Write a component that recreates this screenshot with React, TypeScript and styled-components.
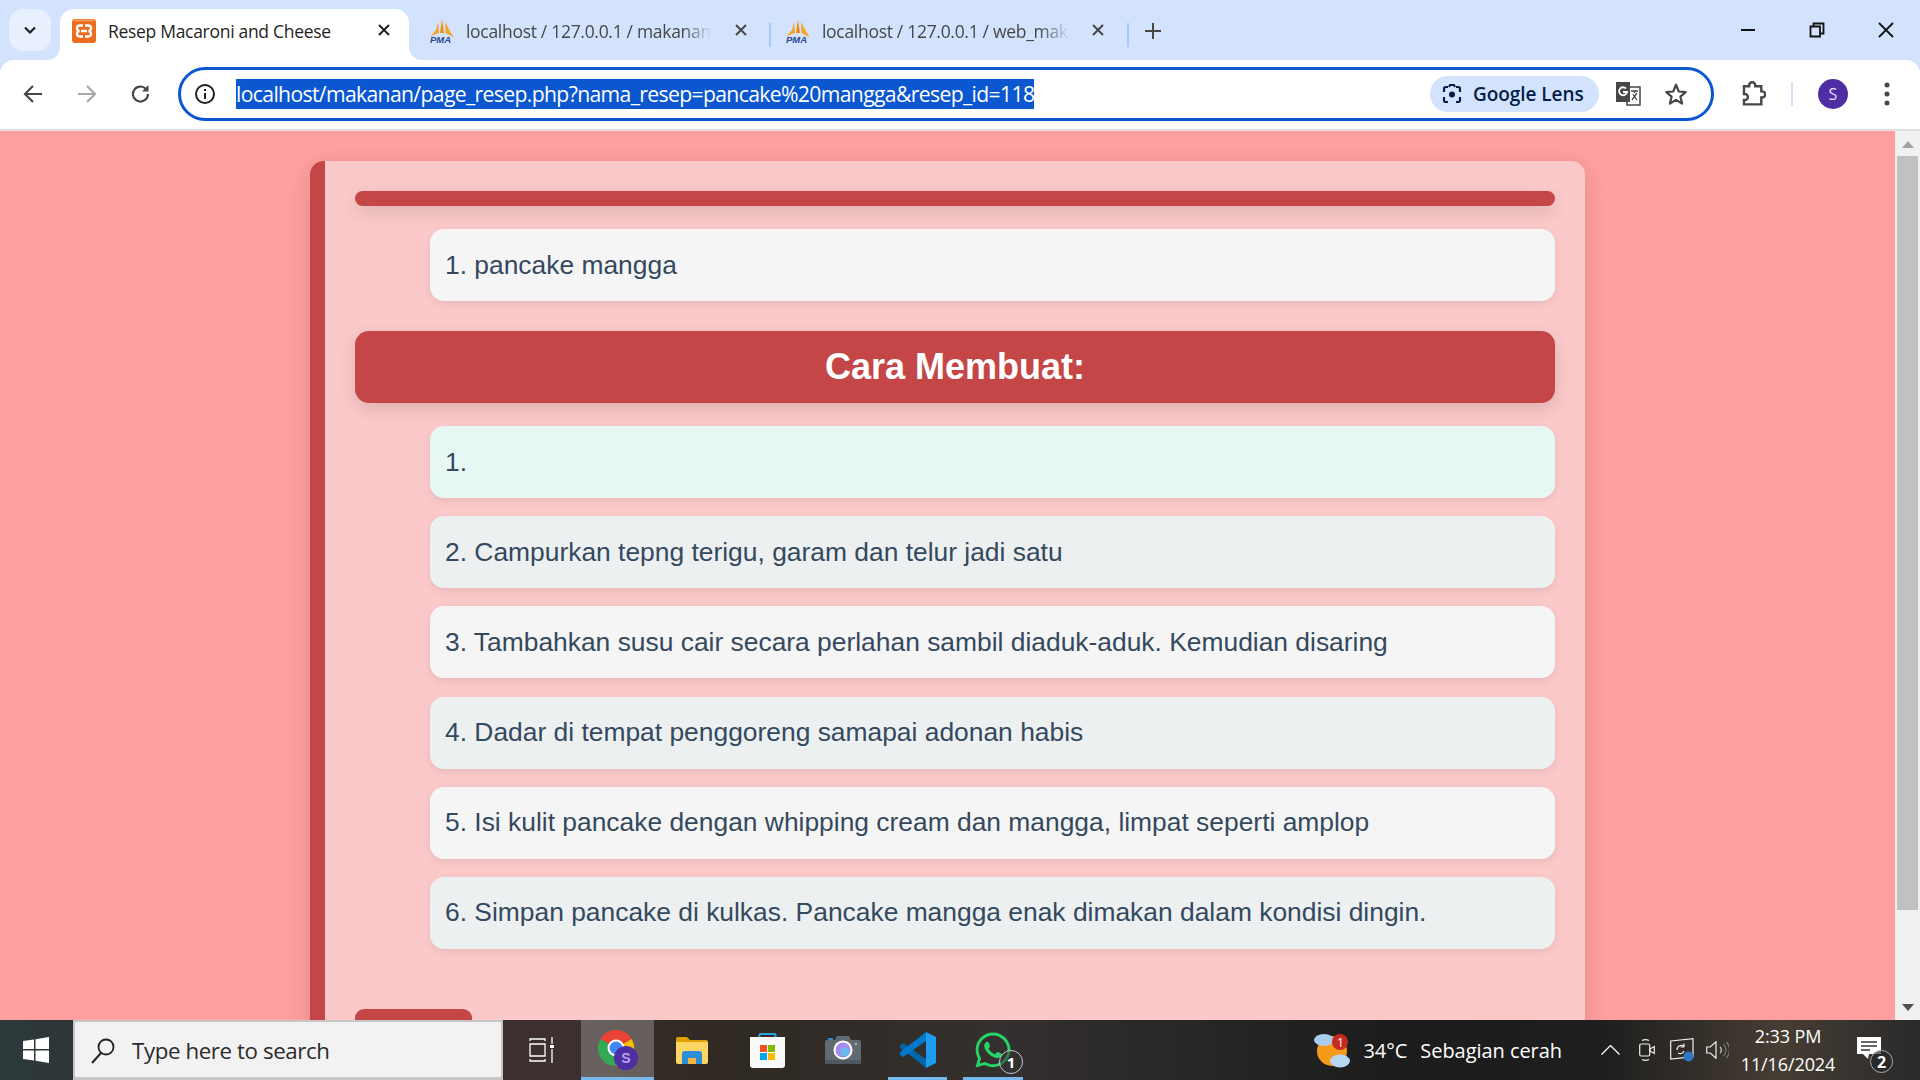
import React from "react"
import styled, { createGlobalStyle } from "styled-components"
import { FaWhatsapp } from "react-icons/fa"

const GlobalStyle = createGlobalStyle`
  html, body {
    margin: 0;
    padding: 0;
    height: 100%;
    overflow: hidden;
  }
  * {
    box-sizing: border-box;
  }
`

const Screen = styled.div`
  width: 1920px;
  height: 1080px;
  display: flex;
  flex-direction: column;
  overflow: hidden;
  background: #d3e3fd;
  font-family: "Open Sans", "Liberation Sans", sans-serif;
`

const TabStrip = styled.div`
  height: 60px;
  flex: none;
  background: #d3e3fd;
  display: flex;
  align-items: flex-end;
  padding-left: 9px;
`

const TabSearch = styled.div`
  width: 42px;
  height: 42px;
  margin-bottom: 9px;
  border-radius: 14px;
  background: #e8f0fe;
  display: flex;
  align-items: center;
  justify-content: center;
  margin-right: 9px;
`

const ActiveTab = styled.div`
  width: 349px;
  height: 51px;
  background: #fff;
  border-radius: 14px 14px 0 0;
  display: flex;
  align-items: center;
  padding: 0 0 8px 12px;
  position: relative;

  &::before,
  &::after {
    content: "";
    position: absolute;
    bottom: 0;
    width: 12px;
    height: 12px;
  }
  &::before {
    right: 100%;
    background: radial-gradient(circle at 0 0, #d3e3fd 11.5px, #fff 12px);
  }
  &::after {
    left: 100%;
    background: radial-gradient(circle at 100% 0, #d3e3fd 11.5px, #fff 12px);
  }
`

const Tab = styled.div<{ $width: number; $pad: number }>`
  width: ${props => props.$width}px;
  height: 51px;
  display: flex;
  align-items: center;
  padding: 0 0 8px ${props => props.$pad}px;
  position: relative;
`

const TabTitle = styled.span<{ $active?: boolean; $width: number }>`
  width: ${props => props.$width}px;
  margin-left: 12px;
  font-size: 17.5px;
  letter-spacing: -0.3px;
  white-space: nowrap;
  overflow: hidden;
  color: ${props => props.$active ? "#1f1f1f" : "#474747"};
  ${props => !props.$active && `
    -webkit-mask-image: linear-gradient(90deg, #000 88%, transparent);
    mask-image: linear-gradient(90deg, #000 88%, transparent);
  `}
`

const TabClose = styled.span<{ $right: number }>`
  position: absolute;
  right: ${props => props.$right}px;
  top: 14px;
  display: flex;
`

const TabDivider = styled.div`
  width: 2px;
  height: 24px;
  margin-bottom: 13px;
  background: #a8c7fa;
`

const NewTab = styled.div`
  width: 48px;
  height: 51px;
  padding-bottom: 8px;
  display: flex;
  align-items: center;
  justify-content: center;
`

const WindowControls = styled.div`
  margin-left: auto;
  height: 60px;
  display: flex;
  align-items: center;
`

const WindowButton = styled.div`
  width: 69px;
  height: 60px;
  display: flex;
  align-items: center;
  justify-content: center;
`

const Toolbar = styled.div`
  height: 71px;
  flex: none;
  background: #fff;
  border-bottom: 2px solid #e0e0e0;
  border-radius: 14px 14px 0 0;
  display: flex;
  align-items: center;
  padding: 0 0 2px 11px;
`

const NavButton = styled.div`
  width: 44px;
  height: 44px;
  margin-right: 10px;
  display: flex;
  align-items: center;
  justify-content: center;
  &:nth-child(3) {
    margin-right: 15px;
  }
`

const Omnibox = styled.div`
  width: 1536px;
  height: 54px;
  border: 3px solid #0b57d0;
  border-radius: 27px;
  display: flex;
  align-items: center;
  padding-left: 13px;
  flex: none;
`

const Url = styled.span`
  margin-left: 20px;
  height: 30px;
  line-height: 30px;
  background: #0b57d0;
  color: #fff;
  font-size: 21.2px;
  letter-spacing: -0.66px;
  white-space: nowrap;
`

const LensPill = styled.div`
  margin-left: auto;
  height: 36px;
  width: 169px;
  border-radius: 18px;
  background: #d3e3fd;
  display: flex;
  align-items: center;
  padding-left: 11px;
  gap: 10px;
  color: #041e49;
  font-size: 19px;
  letter-spacing: -0.05px;
  font-weight: 600;
`

const OmniIcon = styled.div`
  width: 30px;
  height: 30px;
  margin-left: 14px;
  display: flex;
  align-items: center;
  justify-content: center;
  &:last-child {
    margin-right: 20px;
    margin-left: 18px;
  }
`

const ToolbarRight = styled.div`
  flex: 1;
  display: flex;
  align-items: center;
  padding-left: 27px;
`

const ToolbarSeparator = styled.div`
  width: 2px;
  height: 24px;
  margin: 0 25px 0 25px;
  background: #d3e3fd;
`

const Avatar = styled.div`
  width: 30px;
  height: 30px;
  border-radius: 50%;
  background: #4f2da3;
  color: #e8def8;
  font-size: 16px;
  display: flex;
  align-items: center;
  justify-content: center;
  margin-right: 36px;
`

const Body = styled.div`
  flex: 1;
  min-height: 0;
  display: flex;
`

const Page = styled.div`
  flex: 1;
  min-width: 0;
  overflow: hidden;
  background: #ff9f9f;
  padding: 30px 310px 0;
  font-family: "Liberation Sans", Arial, sans-serif;
`

const Card = styled.div`
  background: #fbc9c9;
  border-left: 15px solid #c44646;
  border-radius: 14px 14px 0 0;
  padding: 30px 30px 0;
  box-shadow: 0 6px 24px rgba(0, 0, 0, 0.12);
  height: 1000px;
`

const Rule = styled.div`
  height: 15px;
  background: #c44646;
  border-radius: 8px;
  box-shadow: 0 6px 18px rgba(0, 0, 0, 0.12);
`

const ItemList = styled.div<{ $top: number; $gap: number }>`
  margin-top: ${props => props.$top}px;
  margin-left: 75px;
  display: flex;
  flex-direction: column;
  gap: ${props => props.$gap}px;
`

const Item = styled.div<{ $bg: string }>`
  height: 72px;
  border-radius: 14px;
  background: ${props => props.$bg};
  box-shadow: 0 3px 9px rgba(0, 0, 0, 0.08);
  padding-left: 15px;
  display: flex;
  align-items: center;
  font-size: 26.4px;
  color: #34495e;
`

const SectionHeader = styled.div`
  margin-top: 30px;
  height: 72px;
  border-radius: 14px;
  background: #c44646;
  box-shadow: 0 6px 18px rgba(0, 0, 0, 0.12);
  display: flex;
  align-items: center;
  justify-content: center;
  color: #fff;
  font-weight: 700;
  font-size: 36px;
`

const BackButton = styled.div`
  margin-top: 60px;
  width: 117px;
  height: 50px;
  background: #c44646;
  border-radius: 9px;
`

const Scrollbar = styled.div`
  width: 25px;
  flex: none;
  background: #f1f1f1;
  display: flex;
  flex-direction: column;
  align-items: center;
  justify-content: space-between;
  padding: 10px 2px 9px;
  position: relative;
`

const ScrollThumb = styled.div`
  position: absolute;
  top: 25px;
  left: 2px;
  right: 2px;
  height: 754px;
  background: #c1c1c1;
`

const Taskbar = styled.div`
  height: 60px;
  flex: none;
  display: flex;
  align-items: stretch;
  color: #fff;
  background: linear-gradient(90deg, #2c3a3c 0, #2e3537 70px, #3a2c2c 300px, #3c3030 560px, #2f2922 720px, #33302f 1000px, #1c1c1c 1400px, #1e1e1e 1600px, #463d33 1780px, #2a2a2a 1920px);
`

const StartButton = styled.div`
  width: 73px;
  padding-right: 2px;
  display: flex;
  align-items: center;
  justify-content: center;
`

const SearchBox = styled.div`
  width: 430px;
  background: #f2f2f2;
  border: 2px solid #c6c6c6;
  border-bottom-width: 3px;
  display: flex;
  align-items: center;
  padding: 2px 0 0 15px;
  gap: 16px;
  color: #2b2b2b;
  font-size: 22.3px;
  letter-spacing: -0.4px;
`

const TaskIcon = styled.div<{ $width: number; $open?: boolean; $active?: boolean; $inset?: number }>`
  width: ${props => props.$width}px;
  position: relative;
  display: flex;
  align-items: center;
  justify-content: center;
  background: ${props => props.$active ? "rgba(255,255,255,.24)" : "transparent"};

  &::after {
    content: "";
    display: ${props => props.$open ? "block" : "none"};
    position: absolute;
    bottom: 0;
    height: 3px;
    left: ${props => props.$inset ?? 0}px;
    right: ${props => props.$inset ?? 0}px;
    background: #76b9ed;
  }
`

const CountBadge = styled.span`
  position: absolute;
  left: 44px;
  top: 30px;
  width: 24px;
  height: 24px;
  border-radius: 50%;
  border: 1px solid #c8c8c8;
  background: rgba(50, 50, 50, 0.55);
  color: #fff;
  font-size: 15px;
  font-weight: 700;
  display: flex;
  align-items: center;
  justify-content: center;
`

const Tray = styled.div`
  margin-left: auto;
  padding-right: 19px;
  display: flex;
  align-items: center;
`

const Weather = styled.div`
  display: flex;
  align-items: center;
  font-size: 20px;
  letter-spacing: -0.05px;
  margin-right: 39px;
`

const WeatherText = styled.span`
  white-space: nowrap;
  margin-left: 13px;
  padding-top: 1px;
`

const WeatherBadge = styled.span`
  position: absolute;
  top: 2px;
  right: 2px;
  width: 16px;
  height: 16px;
  border-radius: 50%;
  background: #c42b1c;
  color: #fff;
  font-size: 12px;
  display: flex;
  align-items: center;
  justify-content: center;
`

const WeatherIcon = styled.div`
  position: relative;
  width: 36px;
  height: 36px;
`

const TrayIcon = styled.span<{ $after: number }>`
  display: flex;
  margin-right: ${props => props.$after}px;
`

const Clock = styled.div`
  width: 96px;
  margin-left: 11px;
  text-align: center;
  font-size: 18px;
  letter-spacing: -0.1px;
  line-height: 28px;
  white-space: nowrap;
`

const Notify = styled.div`
  position: relative;
  width: 62px;
  height: 60px;
  margin-left: 3px;
  display: flex;
  align-items: center;
  justify-content: center;
`

const NotifyCount = styled.span`
  position: absolute;
  right: 8px;
  bottom: 7px;
  width: 23px;
  height: 23px;
  border-radius: 50%;
  border: 1px solid #aaa;
  background: rgba(40, 40, 40, 0.7);
  color: #fff;
  font-size: 16px;
  font-weight: 700;
  display: flex;
  align-items: center;
  justify-content: center;
`

const PmaIcon = () => (
  <svg width="24" height="24" viewBox="0 0 24 24">
    <path d="M8 3 6 11 0 18c3-2 7-3.500 9-4z" fill="#f6a428" />
    <path d="M12 0 10 14l4 0z" fill="#f28b1e" />
    <path d="M15 3l.500 11 8 4.500z" fill="#f6a428" />
    <text x="0" y="24" fontSize="9.500" fontWeight="700" fontStyle="italic" fontFamily="Liberation Sans" fill="#2c4a8c">PMA</text>
  </svg>
)

const XamppIcon = () => (
  <svg width="24" height="24" viewBox="0 0 24 24">
    <rect width="24" height="24" rx="3" fill="#ee6c1d" />
    <path d="M2 1.500h20" stroke="#f7a468" strokeWidth="1.500" />
    <path d="M11 6.500H8a2.700 2.700 0 0 0-.5 5.500A2.700 2.700 0 0 0 8 17.500h3M13 6.500h3a2.700 2.700 0 0 1 .5 5.500 2.700 2.700 0 0 1-.5 5.500h-3M9 12h6" fill="none" stroke="#fff" strokeWidth="2.300" />
  </svg>
)

const CloseGlyph = ({ color = "#1f1f1f" }: { color?: string }) => (
  <svg width="14" height="14" viewBox="0 0 14 14">
    <path d="M2 2l10 10M12 2 2 12" stroke={color} strokeWidth="2" />
  </svg>
)

const steps = [
  { text: "1.", bg: "#e6f7f4" },
  { text: "2. Campurkan tepng terigu, garam dan telur jadi satu", bg: "#ecf0f1" },
  { text: "3. Tambahkan susu cair secara perlahan sambil diaduk-aduk. Kemudian disaring", bg: "#f5f5f5" },
  { text: "4. Dadar di tempat penggoreng samapai adonan habis", bg: "#ecf0f1" },
  { text: "5. Isi kulit pancake dengan whipping cream dan mangga, limpat seperti amplop", bg: "#f5f5f5" },
  { text: "6. Simpan pancake di kulkas. Pancake mangga enak dimakan dalam kondisi dingin.", bg: "#ecf0f1" },
]

export default function App() {
  return (
    <Screen>
      <GlobalStyle />
      <TabStrip>
        <TabSearch>
          <svg width="16" height="16" viewBox="0 0 16 16">
            <path d="M3 5.500 8 10.500l5-5" fill="none" stroke="#1f1f1f" strokeWidth="2.200" />
          </svg>
        </TabSearch>
        <ActiveTab>
          <XamppIcon />
          <TabTitle $active $width={270}>Resep Macaroni and Cheese</TabTitle>
          <TabClose $right={18}><CloseGlyph /></TabClose>
        </ActiveTab>
        <Tab $width={360} $pad={21}>
          <PmaIcon />
          <TabTitle $width={246}>localhost / 127.0.0.1 / makanan</TabTitle>
          <TabClose $right={21}><CloseGlyph color="#474747" /></TabClose>
        </Tab>
        <TabDivider />
        <Tab $width={356} $pad={15}>
          <PmaIcon />
          <TabTitle $width={248}>localhost / 127.0.0.1 / web_makanan</TabTitle>
          <TabClose $right={22}><CloseGlyph color="#474747" /></TabClose>
        </Tab>
        <TabDivider />
        <NewTab>
          <svg width="18" height="18" viewBox="0 0 18 18">
            <path d="M9 1v16M1 9h16" stroke="#474747" strokeWidth="2" />
          </svg>
        </NewTab>
        <WindowControls>
          <WindowButton>
            <svg width="14" height="4" viewBox="0 0 14 4"><path d="M0 2h14" stroke="#111" strokeWidth="2" /></svg>
          </WindowButton>
          <WindowButton>
            <svg width="16" height="16" viewBox="0 0 16 16">
              <path d="M1.500 4.500h9.500v10H1.500z M4.500 4V1.500h10v10H11.500" fill="none" stroke="#111" strokeWidth="1.800" />
            </svg>
          </WindowButton>
          <WindowButton>
            <svg width="16" height="16" viewBox="0 0 16 16"><path d="M1 1l14 14M15 1 1 15" stroke="#111" strokeWidth="1.800" /></svg>
          </WindowButton>
        </WindowControls>
      </TabStrip>

      <Toolbar>
        <NavButton>
          <svg width="22" height="22" viewBox="0 0 22 22"><path d="M20 11H3M11 3l-8 8 8 8" fill="none" stroke="#474747" strokeWidth="2.200" /></svg>
        </NavButton>
        <NavButton>
          <svg width="22" height="22" viewBox="0 0 22 22"><path d="M2 11h17M11 3l8 8-8 8" fill="none" stroke="#a9a9a9" strokeWidth="2.200" /></svg>
        </NavButton>
        <NavButton>
          <svg width="22" height="22" viewBox="0 0 22 22">
            <path d="M18 11a7.500 7.500 0 1 1-2.200-5.300" fill="none" stroke="#474747" strokeWidth="2.200" />
            <path d="M18.500 2v6.500H12z" fill="#474747" />
          </svg>
        </NavButton>
        <Omnibox>
          <svg width="22" height="22" viewBox="0 0 22 22">
            <circle cx="11" cy="11" r="9" fill="none" stroke="#1f1f1f" strokeWidth="2" />
            <path d="M11 10v6M11 6v2" stroke="#1f1f1f" strokeWidth="2" />
          </svg>
          <Url>localhost/makanan/page_resep.php?nama_resep=pancake%20mangga&amp;resep_id=118</Url>
          <LensPill>
            <svg width="22" height="24" viewBox="0 0 22 24">
              <path d="M7 5H5a2 2 0 0 0-2 2v3M15 5h2a2 2 0 0 1 2 2v3M3 15v3a2 2 0 0 0 2 2h2M19 15v3a2 2 0 0 1-2 2h-2" fill="none" stroke="#041e49" strokeWidth="2.200" />
              <path d="M8 5l1-2h4l1 2" fill="none" stroke="#041e49" strokeWidth="2" />
              <circle cx="11" cy="12.500" r="3" fill="#041e49" />
            </svg>
            Google Lens
          </LensPill>
          <OmniIcon>
            <svg width="26" height="26" viewBox="0 0 26 26">
              <rect x="12" y="6" width="13" height="18" fill="#fff" stroke="#474747" strokeWidth="1.500" />
              <path d="M1 1h14v20H1z" fill="#474747" />
              <path d="M16 10h7M19.500 10v2M17 19l5-7M18 13l4 6" fill="none" stroke="#474747" strokeWidth="1.300" />
              <path d="M11 7.500A4 4 0 1 0 12 11H8" fill="none" stroke="#fff" strokeWidth="1.800" />
            </svg>
          </OmniIcon>
          <OmniIcon>
            <svg width="24" height="24" viewBox="0 0 26 26">
              <path d="M13 3l3 7.300 7.500.6-5.700 5 1.800 7.500L13 19.400 6.400 23.400l1.800-7.500-5.700-5 7.500-.6z" fill="none" stroke="#474747" strokeWidth="2.400" strokeLinejoin="round" />
            </svg>
          </OmniIcon>
        </Omnibox>
        <ToolbarRight>
          <svg width="25" height="26" viewBox="0 0 28 30">
            <path d="M3 6h6V5a3.500 3.500 0 0 1 7 0v1h7v6h1a3.500 3.500 0 0 1 0 7h-1v8H3v-5h1a3.500 3.500 0 0 0 0-7H3z" fill="none" stroke="#474747" strokeWidth="2.800" />
          </svg>
          <ToolbarSeparator />
          <Avatar>S</Avatar>
          <svg width="6" height="24" viewBox="0 0 6 24">
            <circle cx="3" cy="3" r="2.500" fill="#474747" />
            <circle cx="3" cy="12" r="2.500" fill="#474747" />
            <circle cx="3" cy="21" r="2.500" fill="#474747" />
          </svg>
        </ToolbarRight>
      </Toolbar>

      <Body>
        <Page>
          <Card>
            <Rule />
            <ItemList $top={23} $gap={18}>
              <Item $bg="#f5f5f5">1. pancake mangga</Item>
            </ItemList>
            <SectionHeader>Cara Membuat:</SectionHeader>
            <ItemList $top={23} $gap={18.2}>
              {steps.map(step => (
                <Item key={step.text} $bg={step.bg}>{step.text}</Item>
              ))}
            </ItemList>
            <BackButton />
          </Card>
        </Page>
        <Scrollbar>
          <ScrollThumb />
          <svg width="12" height="7" viewBox="0 0 12 7"><path d="M6 0l6 7H0z" fill="#a3a3a3" /></svg>
          <svg width="12" height="7" viewBox="0 0 12 7"><path d="M0 0h12L6 7z" fill="#505050" /></svg>
        </Scrollbar>
      </Body>

      <Taskbar>
        <StartButton>
          <svg width="26" height="26" viewBox="0 0 26 26">
            <path d="M0 4l11-1.600V12H0zM12.500 2.200 26 0v12H12.500zM0 13.500h11v10L0 22zM12.500 13.500H26V26l-13.500-2.200z" fill="#fff" />
          </svg>
        </StartButton>
        <SearchBox>
          <svg width="26" height="28" viewBox="0 0 26 28">
            <circle cx="16" cy="10" r="7.500" fill="none" stroke="#222" strokeWidth="1.800" />
            <path d="M11 16 2 26" stroke="#222" strokeWidth="2" />
          </svg>
          Type here to search
        </SearchBox>
        <TaskIcon $width={78}>
          <svg width="26" height="28" viewBox="0 0 26 28">
            <path d="M1 5V3h15v2M1 23v2h15v-2M1 8h15v12H1z" fill="none" stroke="#fff" strokeWidth="1.300" />
            <path d="M23 1v7M23 13v14" stroke="#fff" strokeWidth="1.300" />
            <rect x="21" y="9" width="4" height="3" fill="#fff" />
          </svg>
        </TaskIcon>
        <TaskIcon $width={73} $open $active>
          <svg width="40" height="40" viewBox="0 0 40 40">
            <path d="M18 18 2.400 9A18 18 0 0 1 33.600 9z" fill="#ea4335" />
            <path d="M18 18 33.600 9A18 18 0 0 1 18 36z" fill="#fbbc04" />
            <path d="M18 18 18 36A18 18 0 0 1 2.400 9z" fill="#34a853" />
            <circle cx="18" cy="18" r="8.500" fill="#fff" />
            <circle cx="18" cy="18" r="6.500" fill="#4285f4" />
            <circle cx="28" cy="28" r="12" fill="#4f2da3" />
            <text x="28" y="33" textAnchor="middle" fontSize="14" fontWeight="700" fontFamily="Liberation Sans" fill="#b9a3ec">S</text>
          </svg>
        </TaskIcon>
        <TaskIcon $width={76}>
          <svg width="32" height="27" viewBox="0 0 32 27">
            <path d="M0 2a2 2 0 0 1 2-2h9l3 3h16a2 2 0 0 1 2 2v3H0z" fill="#e0a106" />
            <path d="M0 5h32v20a2 2 0 0 1-2 2H2a2 2 0 0 1-2-2z" fill="#fcd565" />
            <path d="M6 17a3 3 0 0 1 3-3h14a3 3 0 0 1 3 3v10H6z" fill="#2a8fd8" />
            <path d="M12 21h8v6h-8z" fill="#f1b63b" />
          </svg>
        </TaskIcon>
        <TaskIcon $width={75}>
          <svg width="35" height="35" viewBox="0 0 35 35">
            <path d="M9.500 6V2a1 1 0 0 1 1-1h14a1 1 0 0 1 1 1v4" fill="none" stroke="#29a3e0" strokeWidth="2" />
            <path d="M0 4h35v28a3 3 0 0 1-3 3H3a3 3 0 0 1-3-3z" fill="#fafafa" />
            <path d="M10 12h7v7h-7z" fill="#f25022" />
            <path d="M18 12h7v7h-7z" fill="#7fba00" />
            <path d="M10 20h7v7h-7z" fill="#00a4ef" />
            <path d="M18 20h7v7h-7z" fill="#ffb900" />
          </svg>
        </TaskIcon>
        <TaskIcon $width={75}>
          <svg width="36" height="28" viewBox="0 0 36 28">
            <path d="M3 5V3a1 1 0 0 1 1-1h3a1 1 0 0 1 1 1v2z" fill="#2a8fd8" />
            <path d="M0 6a2 2 0 0 1 2-2h8l2-4h12l2 4h8a2 2 0 0 1 2 2v22H0z" fill="#5f6a72" />
            <path d="M0 24h36v4H0z" fill="#4f585f" />
            <circle cx="18" cy="14" r="9.500" fill="#fff" />
            <circle cx="18" cy="14" r="7.500" fill="#a48cee" />
            <circle cx="20" cy="16" r="4.500" fill="#6ab8f0" />
            <circle cx="31" cy="8" r="1" fill="#cfd4d8" />
          </svg>
        </TaskIcon>
        <TaskIcon $width={75} $open $inset={8}>
          <svg width="36" height="36" viewBox="0 0 36 36">
            <path d="M26 36V27L3 11 0 13.500v2.500L18.500 30 26 36z" fill="#0065a9" />
            <path d="M26 0v9L3 25 0 22.500V20L18.500 6 26 0z" fill="#007acc" />
            <path d="M26 0 36 5v26l-10 5z" fill="#1f9cf0" />
          </svg>
        </TaskIcon>
        <TaskIcon $width={76} $open $inset={8}>
          <FaWhatsapp size={40} color="#25d366" />
          <CountBadge>1</CountBadge>
        </TaskIcon>
        <Tray>
          <Weather>
            <WeatherIcon>
              <svg width="36" height="36" viewBox="0 0 36 36">
                <circle cx="18" cy="19" r="15" fill="#f59a1b" />
                <ellipse cx="10" cy="8" rx="10" ry="6" fill="#a9cdee" />
                <ellipse cx="26" cy="29" rx="10" ry="6.500" fill="#b7d6f2" />
              </svg>
              <WeatherBadge>1</WeatherBadge>
            </WeatherIcon>
            <WeatherText>34°C</WeatherText>
            <WeatherText>Sebagian cerah</WeatherText>
          </Weather>
          <TrayIcon $after={19}>
            <svg width="19" height="10" viewBox="0 0 19 10"><path d="M.5 9.500l9-9 9 9" fill="none" stroke="#fff" strokeWidth="1.300" /></svg>
          </TrayIcon>
          <TrayIcon $after={15}>
            <svg width="16" height="22" viewBox="0 0 16 22">
              <rect x=".7" y="5" width="10" height="12" rx="1.500" fill="none" stroke="#eee" strokeWidth="1.200" />
              <path d="M11 10l4.300-2.500v7L11 12zM3 1.500c2-1 5-1 7 0M3 20.500c2 1 5 1 7 0" fill="none" stroke="#eee" strokeWidth="1.200" />
            </svg>
          </TrayIcon>
          <TrayIcon $after={12}>
            <svg width="24" height="24" viewBox="0 0 24 24">
              <path d="M.7 3 23 .7v18L.7 21z" fill="none" stroke="#eee" strokeWidth="1.200" />
              <path d="M7 12a4.500 4.500 0 0 1 7.500-3.500M14 9V5.500M14 9h-3.500M14 13a4 4 0 0 1-6 2" fill="none" stroke="#eee" strokeWidth="1.200" />
              <circle cx="18.500" cy="18.500" r="5" fill="#2f78c4" />
            </svg>
          </TrayIcon>
          <TrayIcon $after={0}>
            <svg width="23" height="18" viewBox="0 0 23 18">
              <path d="M.7 6h3.500L10 .8v16.400L4.200 12H.7z" fill="none" stroke="#eee" strokeWidth="1.200" />
              <path d="M14 6a4 4 0 0 1 0 6" fill="none" stroke="#ccc" strokeWidth="1.200" />
              <path d="M17.500 3a8.500 8.500 0 0 1 0 12M20.500 1a12 12 0 0 1 0 16" fill="none" stroke="#777" strokeWidth="1.200" />
            </svg>
          </TrayIcon>
          <Clock>2:33 PM<br />11/16/2024</Clock>
          <Notify>
            <svg width="24" height="22" viewBox="0 0 24 22" style={{ marginRight: 2, marginTop: -4 }}>
              <path d="M0 0h24v17H12l-1 5-5-5H0z" fill="#fff" />
              <path d="M4 5h16M4 9h16M4 13h9" stroke="#333" strokeWidth="1.300" />
            </svg>
            <NotifyCount>2</NotifyCount>
          </Notify>
        </Tray>
      </Taskbar>
    </Screen>
  )
}
